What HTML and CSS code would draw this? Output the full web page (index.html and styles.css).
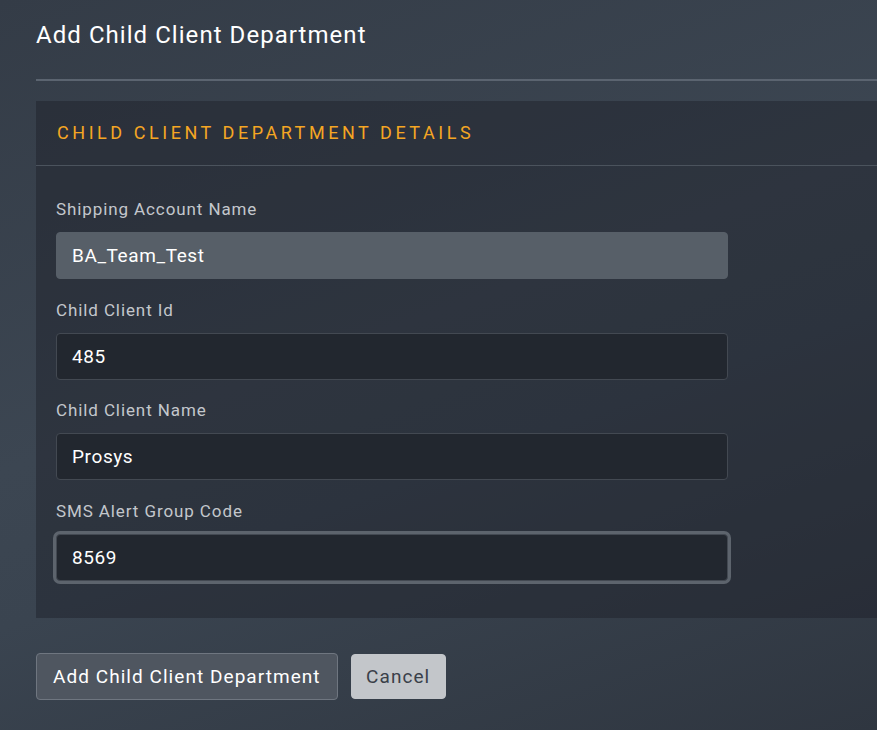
FILE: index.html
```html
<!DOCTYPE html>
<html>
<head>
<meta charset="utf-8">
<link rel="stylesheet" href="styles.css">
</head>
<body>
<div class="page">
  <h1 class="title">Add Child Client Department</h1>
  <div class="rule"></div>
  <section class="panel">
    <div class="panel-head">CHILD CLIENT DEPARTMENT DETAILS</div>
    <div class="panel-body">
      <div class="field">
        <label class="label">Shipping Account Name</label>
        <div class="input disabled">BA_Team_Test</div>
      </div>
      <div class="field">
        <label class="label">Child Client Id</label>
        <div class="input">485</div>
      </div>
      <div class="field">
        <label class="label">Child Client Name</label>
        <div class="input">Prosys</div>
      </div>
      <div class="field">
        <label class="label">SMS Alert Group Code</label>
        <div class="input focus">8569</div>
      </div>
    </div>
  </section>
  <div class="actions">
    <button class="btn primary">Add Child Client Department</button>
    <button class="btn cancel">Cancel</button>
  </div>
</div>
</body>
</html>
```
FILE: styles.css
```css
html, body {
  margin: 0;
  padding: 0;
  height: 100%;
  overflow: hidden;
}
body {
  font-family: Roboto, "Liberation Sans", sans-serif;
  background: linear-gradient(160deg, #343c47 0%, #3c4652 45%, #3a4450 60%, #2f3640 100%);
  color: #fff;
}
.page {
  padding: 20px 0 0 36px;
  width: 900px;
}
.title {
  margin: 0;
  font-size: 24px;
  font-weight: 400;
  line-height: 30px;
  letter-spacing: 1.05px;
  color: #fff;
}
.rule {
  margin-top: 29px;
  height: 2px;
  background: #5b6470;
}
.panel {
  margin-top: 20px;
  background: rgba(28, 32, 40, 0.45);
}
.panel-head {
  height: 64px;
  line-height: 64px;
  padding-left: 21px;
  color: #f5a623;
  font-size: 18px;
  letter-spacing: 3.55px;
  border-bottom: 1px solid #4b535d;
}
.panel-body {
  padding: 31px 0 37px 20px;
  width: 672px;
}
.field {
  display: flex;
  flex-direction: column;
}
.field + .field {
  margin-top: 18.6px;
}
.label {
  font-size: 17px;
  line-height: 24px;
  letter-spacing: 0.9px;
  color: #c3c7cc;
  margin-bottom: 11px;
}
.input {
  height: 45px;
  line-height: 45px;
  border: 1px solid #434952;
  border-radius: 4px;
  background: #22272f;
  padding-left: 15px;
  font-size: 19px;
  letter-spacing: 0.6px;
  color: #fff;
}
.input.disabled {
  background: #575f68;
  border-color: #575f68;
}
.input.focus {
  box-shadow: 0 0 0 3px #5d646d;
}
.actions {
  margin-top: 35px;
  display: flex;
  align-items: center;
  gap: 13px;
}
.btn {
  font-family: Roboto, "Liberation Sans", sans-serif;
  font-size: 19px;
  letter-spacing: 1.05px;
  border-radius: 4px;
  height: 47px;
  padding: 0 16px;
  cursor: pointer;
}
.btn.primary {
  background: #4f5660;
  border: 1px solid #6f7680;
  color: #fff;
}
.btn.cancel {
  background: #c3c6ca;
  border: 1px solid #c3c6ca;
  color: #3a4049;
  height: 45px;
  padding: 0 14.5px;
}
```
